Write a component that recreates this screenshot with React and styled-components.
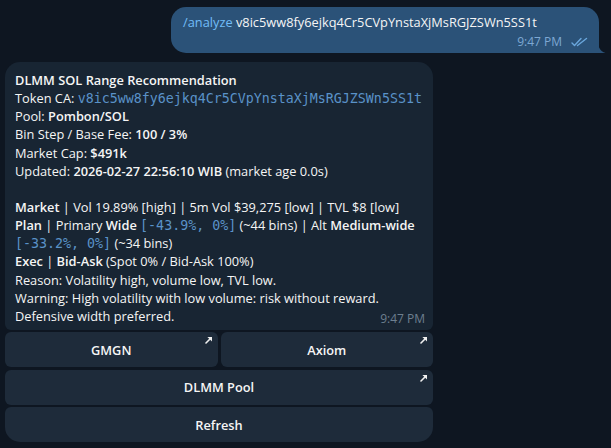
import React from "react";
import styled, { createGlobalStyle } from "styled-components";

const Global = createGlobalStyle`
  html, body { margin: 0; padding: 0; background: #0e1621; }
  body { width: 611px; height: 448px; overflow: hidden; font-family: "Open Sans", "Noto Sans", sans-serif; }
`;

const Page = styled.div`
  width: 611px;
  height: 448px;
  box-sizing: border-box;
  padding: 7px 12px 0 5px;
  display: flex;
  flex-direction: column;
  gap: 9px;
  background: #0e1621;
`;

const OutRow = styled.div`
  display: flex;
  justify-content: flex-end;
`;

const OutBubble = styled.div`
  position: relative;
  width: 428px;
  box-sizing: border-box;
  background: #2b5278;
  border-radius: 15px 15px 0 15px;
  padding: 6px 6px 3px 12px;
  color: #f5f5f5;
  font-size: 12.8px;
  line-height: 18px;
`;

const Link = styled.span`
  color: #71bcf7;
`;

const Meta = styled.div`
  display: flex;
  justify-content: flex-end;
  align-items: center;
  gap: 9px;
  margin-top: 3px;
  font-size: 12px;
  line-height: 16px;
  color: ${(p) => p.$color};
  padding-right: 5px;
`;

const Tail = styled.svg`
  position: absolute;
  right: -7px;
  bottom: 0;
`;

const InBlock = styled.div`
  width: 428px;
  display: flex;
  flex-direction: column;
  gap: 2.5px;
`;

const InBubble = styled.div`
  background: #182533;
  border-radius: 15px 15px 6px 6px;
  padding: 9px 8px 5px 10px;
  color: #f5f5f5;
  font-size: 12.8px;
  line-height: 18.15px;
`;

const Line = styled.div`
  white-space: nowrap;
  height: 18.15px;
`;

const LastLine = styled.div`
  display: flex;
  justify-content: space-between;
  align-items: flex-end;
  white-space: nowrap;
`;

const Time = styled.span`
  font-size: 12px;
  line-height: 16px;
  color: #6d7f8f;
  margin-bottom: -2px;
`;

const B = styled.b`
  font-weight: 600;
`;

const Mono = styled.span`
  font-family: "DejaVu Sans Mono", "Liberation Mono", monospace;
  font-size: 13.3px;
  line-height: 1;
  color: #5a92c8;
`;

const KbRow = styled.div`
  display: flex;
  gap: 3px;
`;

const KbButton = styled.div`
  position: relative;
  flex: 1;
  height: 35px;
  display: flex;
  align-items: center;
  justify-content: center;
  background: #1e2b3a;
  color: #f5f5f5;
  font-size: 12.8px;
  font-weight: 600;
  border-radius: ${(p) => (p.$last ? "6px 6px 15px 15px" : "6px")};
`;

const Arrow = styled.svg`
  position: absolute;
  top: 4px;
  right: 5px;
`;

const ExtArrow = () => (
  <Arrow width="8" height="8" viewBox="0 0 8 8">
    <path d="M1 7 L6.2 1.8" stroke="#f0f0f0" strokeWidth="1.6" strokeLinecap="round" />
    <path d="M2.4 1 H7 V5.6 Z" fill="#f0f0f0" />
  </Arrow>
);

const DoubleCheck = () => (
  <svg width="17" height="10" viewBox="0 0 17 10">
    <path d="M1 6 L3.5 8.5 L10 1.5" fill="none" stroke="#6aa6dc" strokeWidth="1.4" strokeLinecap="round" strokeLinejoin="round" />
    <path d="M6.5 8.5 L15.5 1.5" fill="none" stroke="#6aa6dc" strokeWidth="1.4" strokeLinecap="round" />
  </svg>
);

export default function App() {
  return (
    <>
      <Global />
      <Page>
        <OutRow>
          <OutBubble>
            <div>
              <Link>/analyze</Link> v8ic5ww8fy6ejkq4Cr5CVpYnstaXjMsRGJZSWn5SS1t
            </div>
            <Meta $color="#7da8d3">
              <span>9:47 PM</span>
              <DoubleCheck />
            </Meta>
            <Tail width="8" height="12" viewBox="0 0 8 12">
              <path d="M0 0 C0 6 2 10 7.5 12 L0 12 Z" fill="#2b5278" />
            </Tail>
          </OutBubble>
        </OutRow>
        <InBlock>
          <InBubble>
            <Line><B>DLMM SOL Range Recommendation</B></Line>
            <Line>Token CA: <Mono>v8ic5ww8fy6ejkq4Cr5CVpYnstaXjMsRGJZSWn5SS1t</Mono></Line>
            <Line>Pool: <B>Pombon/SOL</B></Line>
            <Line>Bin Step / Base Fee: <B>100 / 3%</B></Line>
            <Line>Market Cap: <B>$491k</B></Line>
            <Line>Updated: <B>2026-02-27 22:56:10 WIB</B> (market age 0.0s)</Line>
            <Line />
            <Line><B>Market</B> | Vol 19.89% [high] | 5m Vol $39,275 [low] | TVL $8 [low]</Line>
            <Line><B>Plan</B> | Primary <B>Wide</B> <Mono>[-43.9%, 0%]</Mono> (~44 bins) | Alt <B>Medium-wide</B></Line>
            <Line><Mono>[-33.2%, 0%]</Mono> (~34 bins)</Line>
            <Line><B>Exec</B> | <B>Bid-Ask</B> (Spot 0% / Bid-Ask 100%)</Line>
            <Line>Reason: Volatility high, volume low, TVL low.</Line>
            <Line>Warning: High volatility with low volume: risk without reward.</Line>
            <LastLine>
              <span>Defensive width preferred.</span>
              <Time>9:47 PM</Time>
            </LastLine>
          </InBubble>
          <KbRow>
            <KbButton>GMGN<ExtArrow /></KbButton>
            <KbButton>Axiom<ExtArrow /></KbButton>
          </KbRow>
          <KbRow>
            <KbButton>DLMM Pool<ExtArrow /></KbButton>
          </KbRow>
          <KbRow>
            <KbButton $last>Refresh</KbButton>
          </KbRow>
        </InBlock>
      </Page>
    </>
  );
}
